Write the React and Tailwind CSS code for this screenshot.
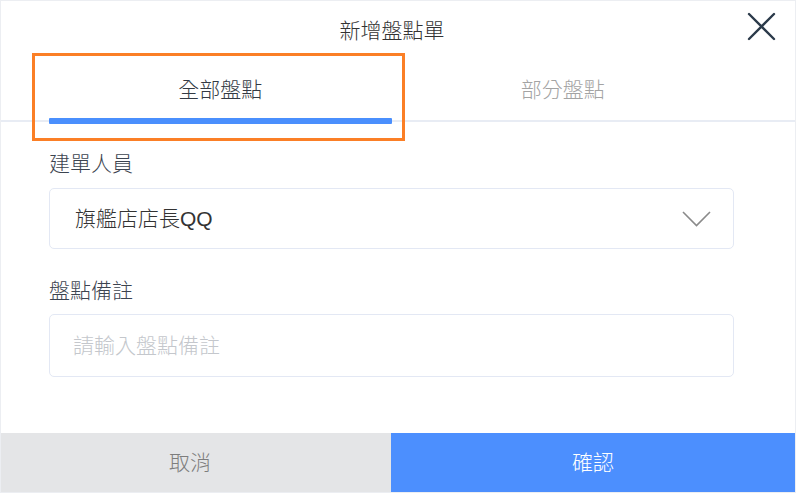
export default function App() {
  const font = { fontFamily: '"Liberation Sans", "Noto Sans CJK TC", sans-serif' };
  return (
    <div
      className="w-[796px] h-[493px] bg-white border border-[#eceef2] flex flex-col relative overflow-hidden font-light"
      style={font}
    >
      {/* header */}
      <div className="relative h-[57px] flex items-center justify-center shrink-0 pr-[12px]">
        <span className="text-[21px] leading-none text-[#333333] pt-[2px]">新增盤點單</span>
        <button className="absolute left-[746px] top-[11px] w-[29px] h-[29px] flex items-center justify-center">
          <svg width="29" height="29" viewBox="0 0 29 29" fill="none">
            <path d="M2 2L27 27M27 2L2 27" stroke="#2b3a4a" strokeWidth="2.4" strokeLinecap="round" />
          </svg>
        </button>
      </div>

      {/* tabs */}
      <div className="border-b-2 border-[#e8ecf4] shrink-0">
        <div className="ml-[48px] mr-[61px] flex h-[62px]">
          <div className="relative flex-1 flex items-center justify-center">
            <span className="text-[21px] leading-none text-[#333a44]">全部盤點</span>
            <div className="absolute left-0 right-0 -bottom-[4px] h-[6px] bg-[#4a8ffd] rounded-[1px]" />
          </div>
          <div className="flex-1 flex items-center justify-center">
            <span className="text-[21px] leading-none text-[#a3a3a3]">部分盤點</span>
          </div>
        </div>
      </div>

      {/* body */}
      <div className="pl-[48px] pr-[61px] pt-[29px]">
        <div className="h-[24px] flex items-center text-[21px] leading-none text-[#3c4450]">建單人員</div>
        <div className="mt-[13px] h-[61px] border border-[#e3e8f4] rounded-[5px] flex items-center justify-between pl-[25px] pr-[22px]">
          <span className="text-[21px] leading-none text-[#333333]">旗艦店店長QQ</span>
          <svg width="29" height="16" viewBox="0 0 29 16" fill="none">
            <path d="M1 1L14.5 14.5L28 1" stroke="#8a8a8a" strokeWidth="1.6" />
          </svg>
        </div>
        <div className="mt-[29px] h-[24px] flex items-center text-[21px] leading-none text-[#3c4450]">盤點備註</div>
        <div className="mt-[12px] h-[63px] border border-[#e3e8f4] rounded-[5px] flex items-center pl-[23px]">
          <span className="text-[21px] leading-none text-[#c4c7cc]">請輸入盤點備註</span>
        </div>
      </div>

      {/* footer */}
      <div className="mt-auto h-[59px] flex shrink-0">
        <div className="w-[390px] bg-[#e4e5e7] flex items-center justify-center pr-[12px]">
          <span className="text-[21px] leading-none text-[#7d7d7d]">取消</span>
        </div>
        <div className="flex-1 bg-[#4c8ffe] flex items-center justify-center">
          <span className="text-[21px] leading-none text-white">確認</span>
        </div>
      </div>

      {/* annotation highlight */}
      <div className="absolute left-[31px] top-[52px] w-[373px] h-[88px] border-[3px] border-[#fb7f26] pointer-events-none" />
    </div>
  );
}
